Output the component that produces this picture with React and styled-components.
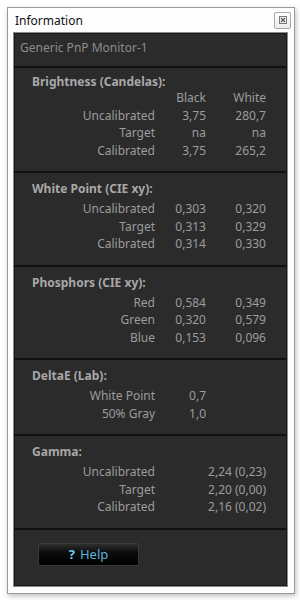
import styled, { createGlobalStyle } from "styled-components";

const GlobalStyle = createGlobalStyle`
  html, body {
    margin: 0;
    padding: 0;
    background: #ffffff;
  }
  body {
    font-family: "Noto Sans", "DejaVu Sans", sans-serif;
  }
`

const sections = [
  {
    title: 'Brightness (Candelas):',
    header: ['Black', 'White'],
    rows: [
      ['Uncalibrated', '3,75', '280,7'],
      ['Target', 'na', 'na'],
      ['Calibrated', '3,75', '265,2'],
    ],
  },
  {
    title: 'White Point (CIE xy):',
    rows: [
      ['Uncalibrated', '0,303', '0,320'],
      ['Target', '0,313', '0,329'],
      ['Calibrated', '0,314', '0,330'],
    ],
  },
  {
    title: 'Phosphors (CIE xy):',
    rows: [
      ['Red', '0,584', '0,349'],
      ['Green', '0,320', '0,579'],
      ['Blue', '0,153', '0,096'],
    ],
  },
  {
    title: 'DeltaE (Lab):',
    rows: [
      ['White Point', '0,7'],
      ['50% Gray', '1,0'],
    ],
  },
  {
    title: 'Gamma:',
    wide: true,
    rows: [
      ['Uncalibrated', '2,24 (0,23)'],
      ['Target', '2,20 (0,00)'],
      ['Calibrated', '2,16 (0,02)'],
    ],
  },
]

function App() {
  return (
    <>
      <GlobalStyle/>
      <Page>
        <Window>
          <TitleBar>
            <Title>Information</Title>
            <CloseButton>
              <svg width="8" height="8" viewBox="0 0 8 8">
                <rect x="0.5" y="0.5" width="7" height="7" fill="none" stroke="#7a7a7a" />
                <path d="M2 2 L6 6 M6 2 L2 6" stroke="#555" strokeWidth="1.2" />
              </svg>
            </CloseButton>
          </TitleBar>
          <Panel>
            <DeviceName>Generic PnP Monitor-1</DeviceName>
            {sections.map((section, i) => (
              <Section key={section.title} $first={i === 0}>
                <Heading>{section.title}</Heading>
                {section.header && (
                  <Table $header>
                    <Label />
                    <Value>{section.header[0]}</Value>
                    <Value>{section.header[1]}</Value>
                  </Table>
                )}
                <Table>
                  {section.rows.map(row => (
                    <Row key={row[0]}>
                      <Label>{row[0]}</Label>
                      {section.wide
                        ? <Value $span>{row[1]}</Value>
                        : <>
                            <Value>{row[1]}</Value>
                            <Value>{row[2] || ''}</Value>
                          </>}
                    </Row>
                  ))}
                </Table>
              </Section>
            ))}
            <Footer>
              <HelpButton>
                <Question>?</Question>
                <span>Help</span>
              </HelpButton>
            </Footer>
          </Panel>
        </Window>
      </Page>
    </>
  );
}

const Page = styled.div`
  width: 300px;
  height: 600px;
  padding: 7px 6px 7px 7px;
  box-sizing: border-box;
`

const Window = styled.div`
  height: 587px;
  width: 288px;
  box-sizing: border-box;
  border: 1px solid #9a9a9a;
  background: #fdfdfd;
  box-shadow: 1px 2px 5px rgba(0, 0, 0, 0.25);
  display: flex;
  flex-direction: column;
  padding: 0 6px 6px 5px;
`

const TitleBar = styled.div`
  height: 24px;
  display: flex;
  align-items: center;
  justify-content: space-between;
`

const Title = styled.div`
  font-family: "Noto Sans", "DejaVu Sans", sans-serif;
  font-size: 12px;
  color: #111;
  padding-left: 2px;
`

const CloseButton = styled.div`
  width: 15px;
  height: 15px;
  margin-right: -3px;
  border: 1px solid #a8a8a8;
  border-radius: 2px;
  background: linear-gradient(#ffffff, #ececec);
  display: flex;
  align-items: center;
  justify-content: center;
`

const Panel = styled.div`
  flex: 1;
  background: #2b2b2b;
  border: 1px solid #8a8a8a;
  box-shadow: inset 0 0 0 1px #1a1a1a;
  display: flex;
  flex-direction: column;
`

const DeviceName = styled.div`
  height: 33px;
  line-height: 30px;
  padding-left: 6px;
  font-size: 12px;
  color: #8c8c8c;
  border-bottom: 2px solid #111;
`

const Section = styled.div`
  padding: ${p => p.$first ? '5px' : '7px'} 0 12px 18px;
  border-bottom: 2px solid #111;
`

const Heading = styled.div`
  font-size: 12px;
  font-weight: bold;
  color: #a8a8a8;
  line-height: 18px;
  margin-bottom: 2px;
`

const Table = styled.div`
  display: grid;
  grid-template-columns: 123px 51px 60px;
  line-height: 17.5px;
  font-size: 12px;
  color: #9c9c9c;
  margin-top: ${p => p.$header ? '-4px' : '0'};
`

const Row = styled.div`
  display: contents;
`

const Label = styled.div`
  text-align: right;
`

const Value = styled.div`
  text-align: right;
  grid-column: ${p => p.$span ? 'span 2' : 'auto'};
`

const Footer = styled.div`
  flex: 1;
  padding: 13px 0 0 24px;
`

const HelpButton = styled.div`
  width: 101px;
  height: 23px;
  box-sizing: border-box;
  border: 1px solid #3a3a3a;
  border-radius: 2px;
  background: linear-gradient(#2e2e2e 0%, #0c0c0c 40%, #000 100%);
  display: flex;
  align-items: center;
  justify-content: center;
  gap: 5px;
  font-size: 13px;
  color: #5ab4dc;
`

const Question = styled.span`
  font-weight: bold;
  color: #6ccdf0;
`

export default App;
